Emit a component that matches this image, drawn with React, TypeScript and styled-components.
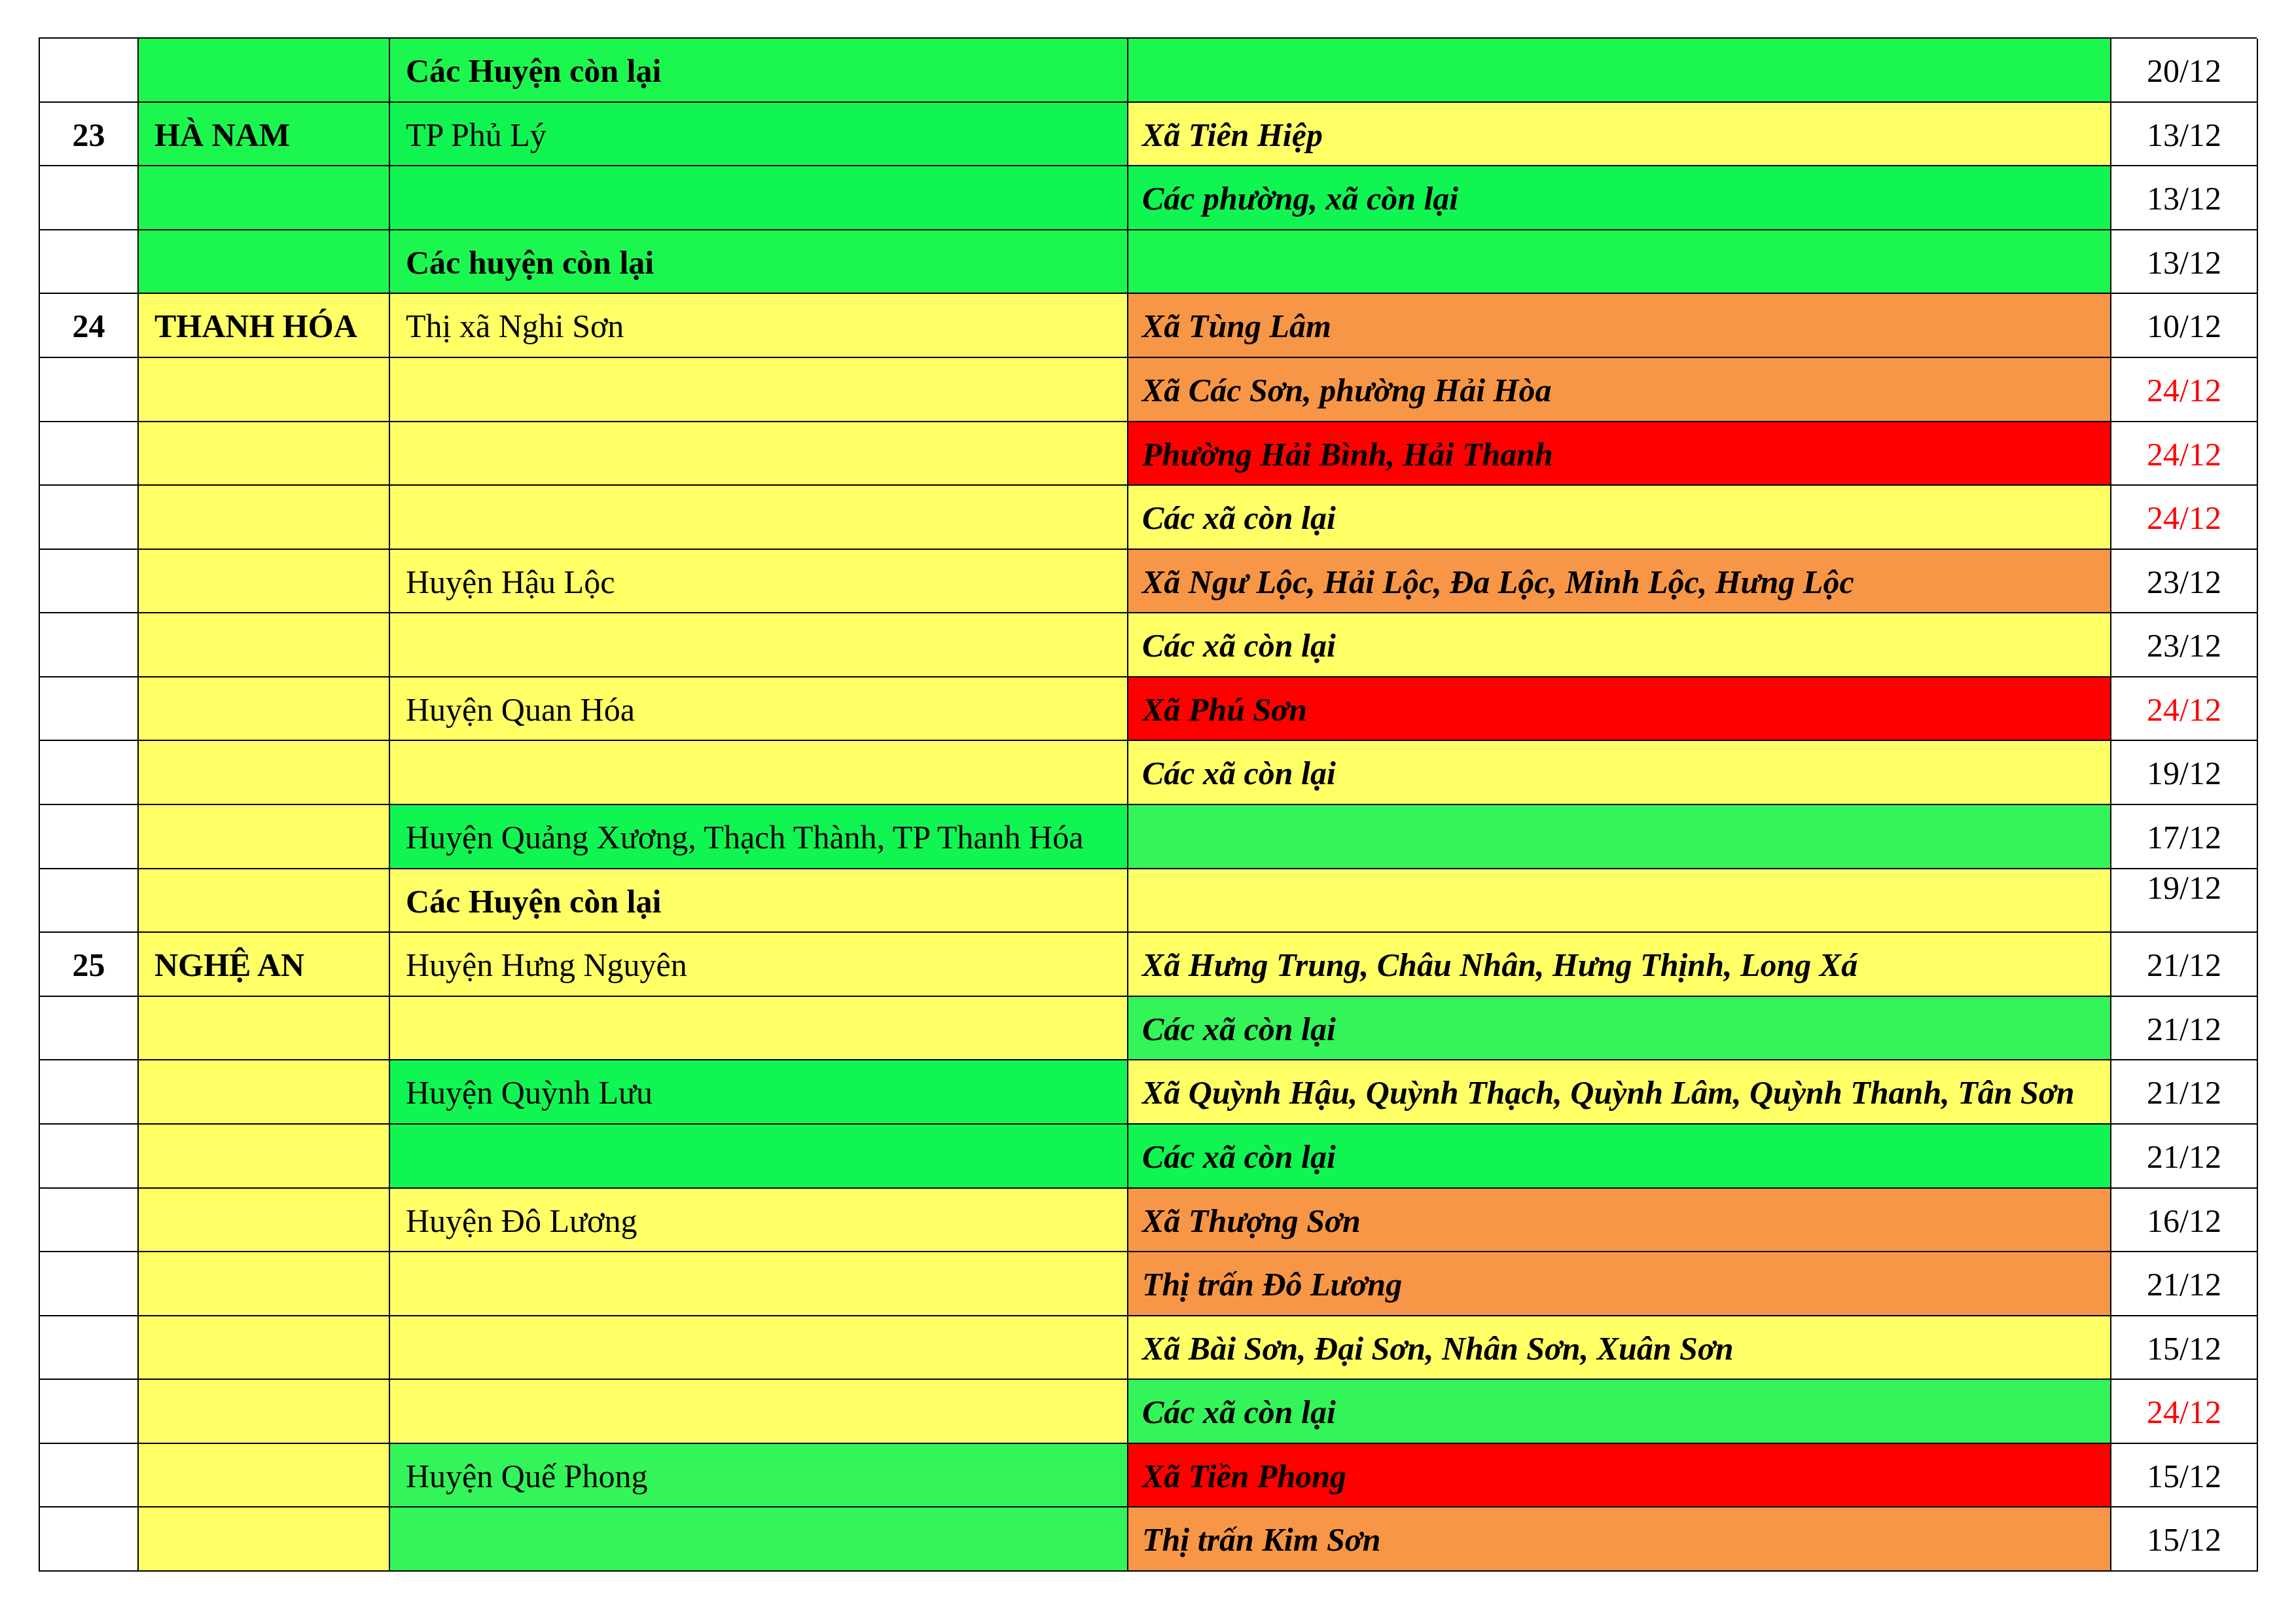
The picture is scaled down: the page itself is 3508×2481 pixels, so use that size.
import React from "react";
import styled, { createGlobalStyle } from "styled-components";

const GlobalStyle = createGlobalStyle`
  * {
    box-sizing: border-box;
  }

  body {
    margin: 0;
    background: #ffffff;
    font-family: "Liberation Serif", "Times New Roman", serif;
    color: #000000;
  }
`;

const GREEN = "#1cf74f";
const GREEN_DEEP = "#10f552";
const GREEN_LIGHT = "#33f458";
const YELLOW = "#ffff66";
const ORANGE = "#f79646";
const RED = "#ff0000";
const WHITE = "#ffffff";

type Fill = string;

interface RowData {
  no?: string;
  province?: string;
  provinceBg: Fill;
  district?: string;
  districtBold?: boolean;
  districtBg: Fill;
  commune?: string;
  communeBg: Fill;
  date: string;
  dateRed?: boolean;
  dateTop?: boolean;
}

const rows: RowData[] = [
  { provinceBg: GREEN, district: "Các Huyện còn lại", districtBold: true, districtBg: GREEN, communeBg: GREEN, date: "20/12" },
  { no: "23", province: "HÀ NAM", provinceBg: GREEN, district: "TP Phủ Lý", districtBg: GREEN_DEEP, commune: "Xã Tiên Hiệp", communeBg: YELLOW, date: "13/12" },
  { provinceBg: GREEN, districtBg: GREEN_DEEP, commune: "Các phường, xã còn lại", communeBg: GREEN_DEEP, date: "13/12" },
  { provinceBg: GREEN, district: "Các huyện còn lại", districtBold: true, districtBg: GREEN, communeBg: GREEN, date: "13/12" },
  { no: "24", province: "THANH HÓA", provinceBg: YELLOW, district: "Thị xã Nghi Sơn", districtBg: YELLOW, commune: "Xã Tùng Lâm", communeBg: ORANGE, date: "10/12" },
  { provinceBg: YELLOW, districtBg: YELLOW, commune: "Xã Các Sơn, phường Hải Hòa", communeBg: ORANGE, date: "24/12", dateRed: true },
  { provinceBg: YELLOW, districtBg: YELLOW, commune: "Phường Hải Bình, Hải Thanh", communeBg: RED, date: "24/12", dateRed: true },
  { provinceBg: YELLOW, districtBg: YELLOW, commune: "Các xã còn lại", communeBg: YELLOW, date: "24/12", dateRed: true },
  { provinceBg: YELLOW, district: "Huyện Hậu Lộc", districtBg: YELLOW, commune: "Xã Ngư Lộc, Hải Lộc, Đa Lộc, Minh Lộc, Hưng Lộc", communeBg: ORANGE, date: "23/12" },
  { provinceBg: YELLOW, districtBg: YELLOW, commune: "Các xã còn lại", communeBg: YELLOW, date: "23/12" },
  { provinceBg: YELLOW, district: "Huyện Quan Hóa", districtBg: YELLOW, commune: "Xã Phú Sơn", communeBg: RED, date: "24/12", dateRed: true },
  { provinceBg: YELLOW, districtBg: YELLOW, commune: "Các xã còn lại", communeBg: YELLOW, date: "19/12" },
  { provinceBg: YELLOW, district: "Huyện Quảng Xương, Thạch Thành, TP Thanh Hóa", districtBg: GREEN_DEEP, communeBg: GREEN_LIGHT, date: "17/12" },
  { provinceBg: YELLOW, district: "Các Huyện còn lại", districtBold: true, districtBg: YELLOW, communeBg: YELLOW, date: "19/12", dateTop: true },
  { no: "25", province: "NGHỆ AN", provinceBg: YELLOW, district: "Huyện Hưng Nguyên", districtBg: YELLOW, commune: "Xã Hưng Trung, Châu Nhân, Hưng Thịnh, Long Xá", communeBg: YELLOW, date: "21/12" },
  { provinceBg: YELLOW, districtBg: YELLOW, commune: "Các xã còn lại", communeBg: GREEN_LIGHT, date: "21/12" },
  { provinceBg: YELLOW, district: "Huyện Quỳnh Lưu", districtBg: GREEN_DEEP, commune: "Xã Quỳnh Hậu, Quỳnh Thạch, Quỳnh Lâm, Quỳnh Thanh, Tân Sơn", communeBg: YELLOW, date: "21/12" },
  { provinceBg: YELLOW, districtBg: GREEN_DEEP, commune: "Các xã còn lại", communeBg: GREEN_DEEP, date: "21/12" },
  { provinceBg: YELLOW, district: "Huyện Đô Lương", districtBg: YELLOW, commune: "Xã Thượng Sơn", communeBg: ORANGE, date: "16/12" },
  { provinceBg: YELLOW, districtBg: YELLOW, commune: "Thị trấn Đô Lương", communeBg: ORANGE, date: "21/12" },
  { provinceBg: YELLOW, districtBg: YELLOW, commune: "Xã Bài Sơn, Đại Sơn, Nhân Sơn, Xuân Sơn", communeBg: YELLOW, date: "15/12" },
  { provinceBg: YELLOW, districtBg: YELLOW, commune: "Các xã còn lại", communeBg: GREEN_LIGHT, date: "24/12", dateRed: true },
  { provinceBg: YELLOW, district: "Huyện Quế Phong", districtBg: GREEN_LIGHT, commune: "Xã Tiền Phong", communeBg: RED, date: "15/12" },
  { provinceBg: YELLOW, districtBg: GREEN_LIGHT, commune: "Thị trấn Kim Sơn", communeBg: ORANGE, date: "15/12" },
];

const Page = styled.div`
  padding: 57px 0 0 59px;
`;

const Sheet = styled.div`
  display: grid;
  grid-template-columns: 151px 384px 1128px 1502px 224px;
  grid-template-rows: repeat(24, 1fr);
  width: 3389px;
  height: 2344px;
  border-top: 2px solid #000;
  border-left: 2px solid #000;
`;

const Cell = styled.div<{ $bg?: string }>`
  display: flex;
  align-items: center;
  min-width: 0;
  padding: 4px 0 0 24px;
  background: ${({ $bg }) => $bg || WHITE};
  border-right: 2px solid #000;
  border-bottom: 2px solid #000;
  font-size: 50px;
  line-height: 1.15;
  white-space: nowrap;
`;

const IndexCell = styled(Cell)`
  justify-content: center;
  padding-left: 0;
  font-weight: bold;
`;

const ProvinceCell = styled(Cell)`
  font-weight: bold;
`;

const DistrictCell = styled(Cell)<{ $bold?: boolean }>`
  font-weight: ${({ $bold }) => ($bold ? "bold" : "normal")};
`;

const CommuneCell = styled(Cell)`
  padding-left: 21px;
  font-weight: bold;
  font-style: italic;
`;

const DateCell = styled(Cell)<{ $red?: boolean; $top?: boolean }>`
  justify-content: center;
  align-items: ${({ $top }) => ($top ? "flex-start" : "center")};
  padding-left: 0;
  padding-top: ${({ $top }) => ($top ? "0" : "4px")};
  color: ${({ $red }) => ($red ? "#ff0000" : "#000000")};
`;

export default function App() {
  return (
    <>
      <GlobalStyle />
      <Page>
        <Sheet>
          {rows.map((r, i) => (
            <React.Fragment key={i}>
              <IndexCell>{r.no}</IndexCell>
              <ProvinceCell $bg={r.provinceBg}>{r.province}</ProvinceCell>
              <DistrictCell $bg={r.districtBg} $bold={r.districtBold}>
                {r.district}
              </DistrictCell>
              <CommuneCell $bg={r.communeBg}>{r.commune}</CommuneCell>
              <DateCell $red={r.dateRed} $top={r.dateTop}>
                {r.date}
              </DateCell>
            </React.Fragment>
          ))}
        </Sheet>
      </Page>
    </>
  );
}
